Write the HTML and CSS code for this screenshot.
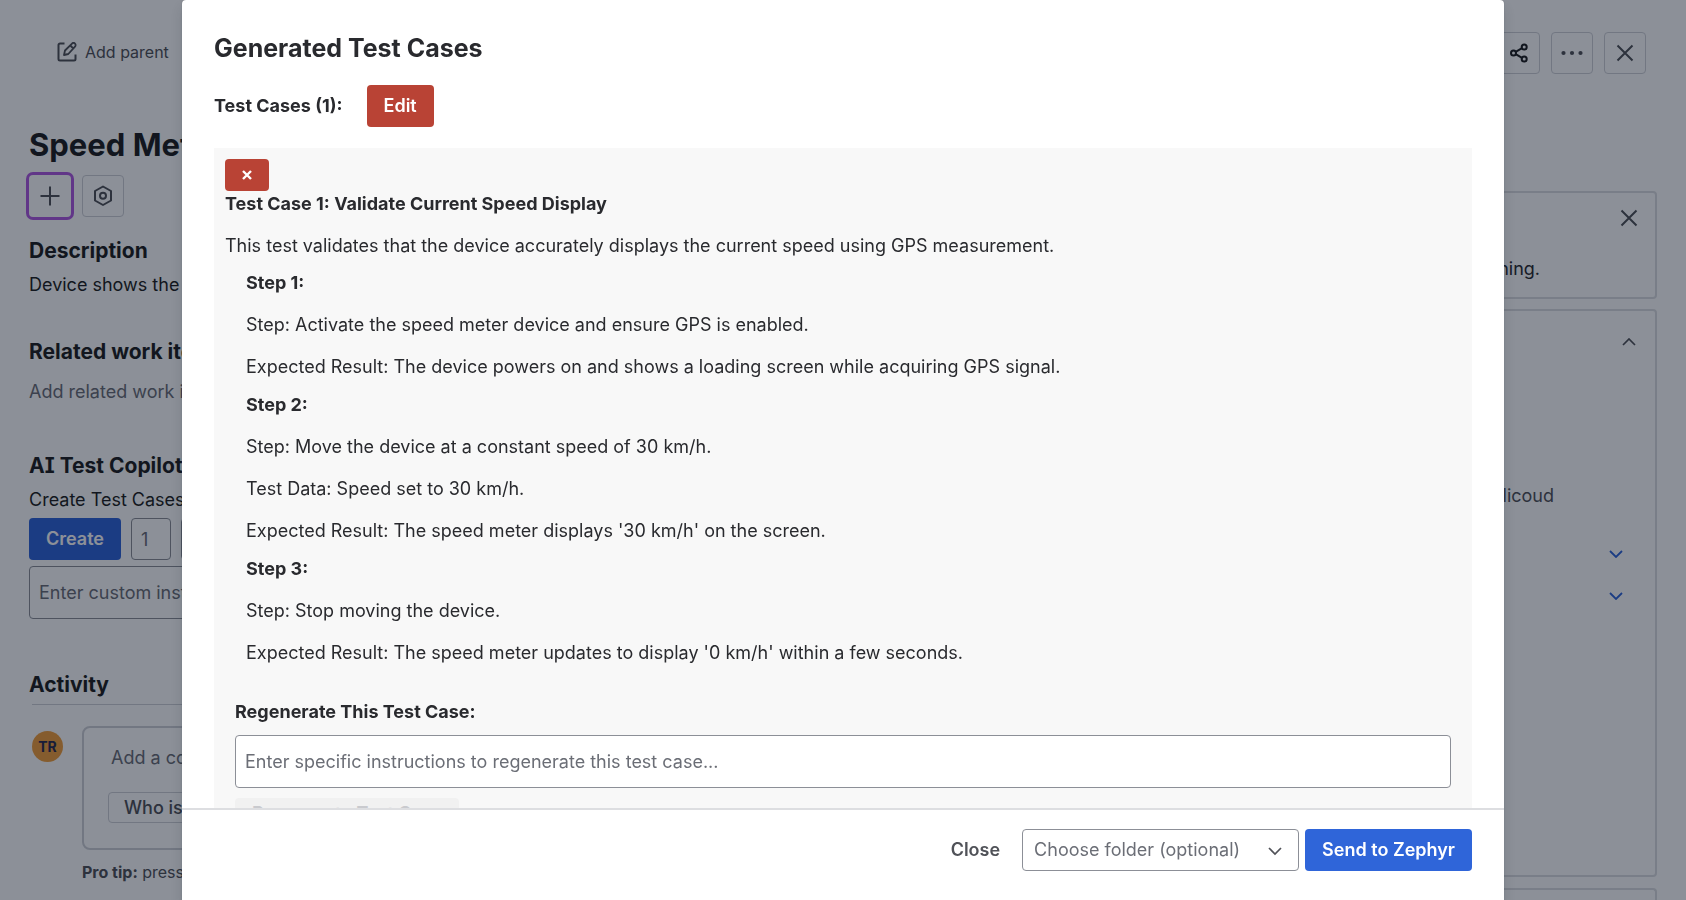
FILE: index.html
```html
<!DOCTYPE html>
<html lang="en">
<head>
<meta charset="utf-8">
<title>Generated Test Cases</title>
<link rel="stylesheet" href="styles.css">
</head>
<body>
<div class="page">
  <main class="issue">
    <button class="parent-link" type="button">
      <svg width="20" height="20" viewBox="0 0 20 20" fill="none" stroke="currentColor" stroke-width="2" stroke-linejoin="round"><path d="M7.500 1.500H3a1.500 1.500 0 0 0-1.500 1.500v14A1.500 1.500 0 0 0 3 18.500h14a1.500 1.500 0 0 0 1.500-1.500v-4.500"/><path d="M7 13l1-4.500L15 1.600a2 2 0 0 1 3 3L11.300 12zM13.300 3.500l3 3" stroke-width="1.800"/></svg>
      Add parent
    </button>
    <h1 class="issue-title">Speed Meter</h1>
    <div class="quick-actions">
      <button class="icon-button focused" type="button" aria-label="Add"><svg width="20" height="20" viewBox="0 0 20 20" fill="none" stroke="currentColor" stroke-width="2"><path d="M10 0.500v19M0.500 10h19"/></svg></button>
      <button class="icon-button" type="button" aria-label="Apps"><svg width="20" height="22" viewBox="0 0 20 22" fill="none" stroke="currentColor" stroke-width="2" stroke-linejoin="round"><path d="M10 1.500l8 4.500v9.500l-8 4.500-8-4.500V6z"/><circle cx="10" cy="10.800" r="3"/></svg></button>
    </div>
    <section class="section description">
      <h2>Description</h2>
      <p>Device shows the current speed</p>
    </section>
    <section class="section related">
      <h2>Related work items</h2>
      <p class="muted">Add related work item</p>
    </section>
    <section class="section copilot">
      <h2>AI Test Copilot</h2>
      <p>Create Test Cases</p>
      <div class="create-row">
        <button class="button primary" type="button">Create</button>
        <input class="field count" type="text" value="1" aria-label="Number of test cases">
        <input class="field kind" type="text" aria-label="Test type">
      </div>
      <textarea class="field area" rows="1" placeholder="Enter custom instructions..." aria-label="Custom instructions"></textarea>
    </section>
    <section class="activity">
      <h2>Activity</h2>
      <div class="comment-row">
        <span class="avatar">TR</span>
        <div class="comment-column">
          <div class="comment-box">
            <span class="muted">Add a comment…</span>
            <button class="suggestion" type="button">Who is working on this?</button>
          </div>
          <p class="tip"><strong>Pro tip:</strong> press M to comment</p>
        </div>
      </div>
    </section>
  </main>
  <aside class="side">
    <div class="toolbar">
      <button class="icon-button dark" type="button" aria-label="Share"><svg width="18" height="20" viewBox="0 0 18 20" fill="none" stroke="currentColor" stroke-width="2"><circle cx="3.500" cy="10" r="2.500"/><circle cx="14.200" cy="4" r="2.500"/><circle cx="14.200" cy="16" r="2.500"/><path d="M5.700 8.800l6.300-3.600M5.700 11.200l6.300 3.600"/></svg></button>
      <button class="icon-button" type="button" aria-label="More"><svg width="22" height="6" viewBox="0 0 22 6" fill="currentColor"><circle cx="2.500" cy="3" r="2.100"/><circle cx="11" cy="3" r="2.100"/><circle cx="19.500" cy="3" r="2.100"/></svg></button>
      <button class="icon-button" type="button" aria-label="Close issue"><svg width="18" height="18" viewBox="0 0 18 18" fill="none" stroke="currentColor" stroke-width="2"><path d="M1.500 1.500l15 15M16.500 1.500l-15 15"/></svg></button>
    </div>
    <section class="card notice">
      <button class="plain" type="button" aria-label="Dismiss"><svg width="18" height="18" viewBox="0 0 18 18" fill="none" stroke="currentColor" stroke-width="2"><path d="M1.500 1.500l15 15M16.500 1.500l-15 15"/></svg></button>
      <p class="notice-text">ning.</p>
    </section>
    <section class="card details">
      <button class="plain" type="button" aria-label="Collapse details"><svg width="14" height="8" viewBox="0 0 14 8" fill="none" stroke="currentColor" stroke-width="1.700"><path d="M1 7l6-6 6 6"/></svg></button>
      <p class="person">licoud</p>
      <div class="expanders">
        <button class="plain blue" type="button" aria-label="Expand first"><svg width="14" height="8" viewBox="0 0 14 8" fill="none" stroke="currentColor" stroke-width="1.800"><path d="M1 1l6 6 6-6"/></svg></button>
        <button class="plain blue" type="button" aria-label="Expand second"><svg width="14" height="8" viewBox="0 0 14 8" fill="none" stroke="currentColor" stroke-width="1.800"><path d="M1 1l6 6 6-6"/></svg></button>
      </div>
    </section>
    <section class="card next"></section>
  </aside>
</div>

<div class="blanket">
  <div class="modal" role="dialog" aria-modal="true" aria-labelledby="modal-title">
    <div class="modal-body">
      <h2 class="modal-title" id="modal-title">Generated Test Cases</h2>
      <div class="count-row">
        <strong>Test Cases (1):</strong>
        <button class="button danger" type="button">Edit</button>
      </div>
      <div class="panel">
        <button class="remove" type="button" aria-label="Remove test case"><svg width="10" height="10" viewBox="0 0 10 10" fill="none" stroke="currentColor" stroke-width="2.400"><path d="M1 1l8 8M9 1l-8 8"/></svg></button>
        <h3>Test Case 1: Validate Current Speed Display</h3>
        <p class="summary">This test validates that the device accurately displays the current speed using GPS measurement.</p>
        <div class="step">
          <h4>Step 1:</h4>
          <p>Step: Activate the speed meter device and ensure GPS is enabled.</p>
          <p>Expected Result: The device powers on and shows a loading screen while acquiring GPS signal.</p>
        </div>
        <div class="step">
          <h4>Step 2:</h4>
          <p>Step: Move the device at a constant speed of 30 km/h.</p>
          <p>Test Data: Speed set to 30 km/h.</p>
          <p>Expected Result: The speed meter displays '30 km/h' on the screen.</p>
        </div>
        <div class="step">
          <h4>Step 3:</h4>
          <p>Step: Stop moving the device.</p>
          <p>Expected Result: The speed meter updates to display '0 km/h' within a few seconds.</p>
        </div>
        <div class="regenerate">
          <label for="regen">Regenerate This Test Case:</label>
          <textarea class="field area" id="regen" rows="1" placeholder="Enter specific instructions to regenerate this test case..."></textarea>
          <button class="button disabled" type="button" disabled>Regenerate Test Case</button>
        </div>
      </div>
    </div>
    <footer class="modal-footer">
      <button class="button subtle" type="button">Close</button>
      <div class="footer-actions">
        <span class="select-wrap">
          <select class="field folder" aria-label="Folder"><option>Choose folder (optional)</option></select>
          <svg class="select-arrow" width="14" height="9" viewBox="0 0 14 9" fill="none" stroke="currentColor" stroke-width="1.700"><path d="M1 1l6 6 6-6"/></svg>
        </span>
        <button class="button primary" type="button">Send to Zephyr</button>
      </div>
    </footer>
  </div>
</div>
</body>
</html>
```
FILE: styles.css
```css
* { box-sizing: border-box; }
html, body { height: 100%; }
body {
  margin: 0;
  overflow: hidden;
  background: #fff;
  color: #292a2e;
  font: 440 18px/26px Inter, "Liberation Sans", sans-serif;
}
h1, h2, h3, h4, p { margin: 0; }
button, input, textarea, select { font: inherit; color: inherit; margin: 0; }
button { padding: 0; border: 0; background: none; }
svg { display: block; flex: none; }
.muted { color: #6b6e76; }

/* Issue page */
.page { display: flex; height: 100%; padding: 32px 29px 0; overflow: hidden; }
.issue { flex: 1; min-width: 0; color: #1e1f21; }
.parent-link {
  display: flex; align-items: center; gap: 8px;
  height: 40px; padding-left: 28px;
  color: #505258; font-size: 16px; font-weight: 400;
}
.issue-title { margin-top: 53px; font-size: 31px; line-height: 40px; font-weight: 700; }
.quick-actions { display: flex; gap: 11px; margin-top: 10px; }
.icon-button {
  display: flex; align-items: center; justify-content: center;
  width: 42px; height: 42px;
  border: 1px solid #cfd1d6; border-radius: 4px; color: #505258;
}
.icon-button.dark { color: #1e1f21; }
.focused { border-color: transparent; box-shadow: 0 0 0 3px #af59e1; }
.section h2, .activity h2 { font-size: 21px; line-height: 28px; font-weight: 650; }
.description { margin-top: 20px; }
.description p { margin-top: 7px; }
.related { margin-top: 40px; }
.related p { margin-top: 13px; }
.copilot { margin-top: 47px; }
.copilot h2 { font-feature-settings: "cv08"; }
.copilot p { margin-top: 7px; }
.create-row { display: flex; gap: 10px; margin-top: 5px; }
.button {
  height: 42px; padding: 0 17px;
  border-radius: 4px; font-weight: 600; white-space: nowrap;
}
.primary { background: #2f65d9; color: #fff; }
.danger { background: #b94335; color: #fff; }
.field { border: 1px solid #8c8f97; border-radius: 4px; background: #fff; }
.field::placeholder { color: #6b6e76; opacity: 1; }
.count { width: 40px; height: 42px; padding: 0 9px; color: #6b6e76; }
.kind { width: 200px; height: 42px; }
.area { display: block; width: 100%; height: 53px; padding: 13px 9px 12px; resize: none; overflow: hidden; }
.copilot .area { margin-top: 6px; }
.activity { margin-top: 52px; }
.activity h2 { padding-bottom: 5px; }
.comment-row { display: flex; align-items: flex-start; gap: 19px; margin-left: 3px; padding-top: 21px; border-top: 1px solid #cfd1d6; }
.avatar {
  width: 31px; height: 31px; margin-top: 5px;
  border-radius: 50%; background: #f2a03c; color: #292a4e;
  font-size: 14px; line-height: 31px; font-weight: 650; text-align: center;
}
.comment-column { flex: 1; }
.comment-box {
  display: flex; flex-direction: column; align-items: flex-start; gap: 21px;
  height: 124px; padding: 17px 24px;
  border: 2px solid #cfd1d6; border-radius: 8px;
}
.comment-box .muted { padding-left: 3px; }
.suggestion { height: 31px; padding: 0 15px; border: 1px solid #cfd1d6; border-radius: 4px; color: #505258; font-weight: 550; }
.tip { margin-top: 9px; color: #505258; font-size: 16px; font-weight: 400; }

.side { display: flex; flex-direction: column; width: 500px; margin-left: 24px; }
.toolbar { display: flex; justify-content: flex-end; gap: 11px; padding-right: 11px; }
.card { flex: none; border: 2px solid #dddee1; border-radius: 4px; }
.plain { display: flex; margin-left: auto; color: #505258; }
.blue { color: #2f65d9; }
.notice { height: 108px; margin-top: 117px; padding: 16px 17px; }
.notice-text { margin: 29px 98px 0 0; text-align: right; color: #292a2e; }
.details { height: 568px; margin-top: 10px; padding: 27px 19px; }
.person { margin: 137px 82px 0 0; text-align: right; color: #505258; }
.expanders { display: grid; gap: 34px; margin: 41px 13px 0 0; }
.next { flex: 1; min-height: 0; margin-top: 11px; border-bottom: 0; border-radius: 4px 4px 0 0; }

/* Dialog */
.blanket { position: fixed; inset: 0; display: flex; justify-content: center; background: rgba(5, 12, 31, 0.46); }
.modal {
  display: flex; flex-direction: column;
  width: min(1322px, 100%);
  border-radius: 4px 4px 0 0; background: #fff;
  box-shadow: 0 8px 12px rgba(30, 31, 33, 0.15), 0 0 1px rgba(30, 31, 33, 0.31);
}
.modal-body { flex: 1; min-height: 0; overflow: hidden; padding: 32px 32px 0; }
.modal-title { font-size: 25px; line-height: 32px; font-weight: 650; }
.count-row { display: flex; align-items: center; gap: 24px; margin-top: 21px; }
strong, h3, h4, label { font-weight: 700; font-size: inherit; }
.panel { margin-top: 21px; padding: 11px; background: #f8f8f8; }
.remove {
  display: flex; align-items: center; justify-content: center;
  width: 44px; height: 32px; border-radius: 4px; background: #b94335; color: #fff;
}
.summary { margin-top: 16px; }
.step { margin: 12px 0 0 21px; }
.summary + .step { margin-top: 11px; }
.step p { margin-top: 16px; }
.regenerate { margin: 33px 10px 0; }
.regenerate label { display: block; margin-bottom: 10px; }
.disabled { height: 32px; margin-top: 10px; background: #f1f1f1; color: #c9cace; }
.modal-footer {
  display: flex; justify-content: flex-end; align-items: center; gap: 5px;
  padding: 19px 32px 29px; border-top: 2px solid #dddee1;
}
.subtle { color: #505258; }
.footer-actions { display: flex; gap: 6px; }
.select-wrap { position: relative; color: #505258; }
.folder { appearance: none; width: 277px; height: 42px; padding: 0 11px; color: #6b6e76; }
.select-arrow { position: absolute; right: 17px; top: 18px; }
```
